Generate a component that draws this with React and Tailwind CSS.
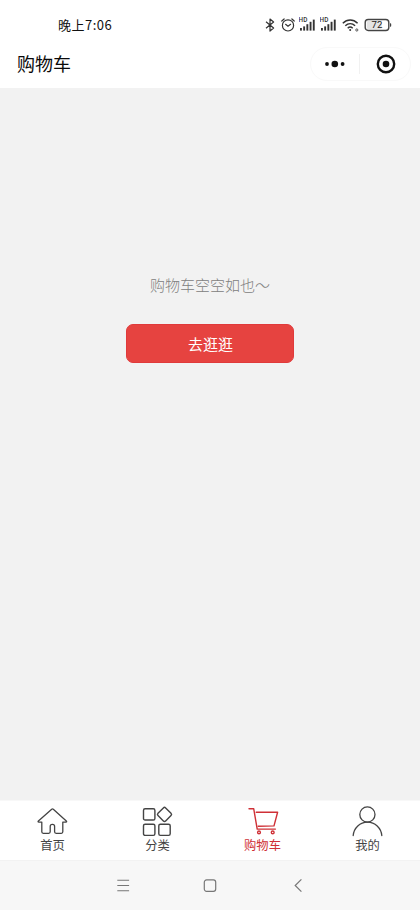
import React from 'react';

const tabs = [
  { label: '首页', icon: HomeIcon },
  { label: '分类', icon: CategoryIcon },
  { label: '购物车', icon: CartIcon, active: true },
  { label: '我的', icon: UserIcon },
];

function HomeIcon() {
  return (
    <svg className="h-8 w-8" viewBox="0 0 32 32" fill="none" stroke="currentColor" strokeWidth="1.3" strokeLinejoin="round" strokeLinecap="round">
      <path d="M14.7 4.2 1.4 15.9c-.6.6-.4 1.2.4 1.2h3v9.7c0 1 .5 1.5 1.5 1.5h5.4c1 0 1.5-.5 1.5-1.5v-5.3c0-1.3.8-2.1 2.1-2.1h.2c1.3 0 2.1.8 2.1 2.1v5.3c0 1 .5 1.5 1.5 1.5h5.2c1 0 1.5-.5 1.5-1.5v-9.7h3.1c.8 0 1-.6.4-1.2L16.3 4.2c-.5-.4-1.1-.4-1.6 0z" />
    </svg>
  );
}

function CategoryIcon() {
  return (
    <svg className="h-8 w-8" viewBox="0 0 32 32" fill="none" stroke="currentColor" strokeWidth="1.4">
      <rect x="1.5" y="3.8" width="11.4" height="11.2" rx="1.6" />
      <rect x="1.5" y="19.2" width="11.4" height="11.2" rx="1.6" />
      <rect x="16.8" y="19.2" width="11.4" height="11.2" rx="1.6" />
      <rect x="17.1" y="4" width="10.8" height="10.8" rx="1.6" transform="rotate(45 22.5 9.4)" />
    </svg>
  );
}

function CartIcon() {
  return (
    <svg className="h-8 w-8" viewBox="0 0 32 32" fill="none" stroke="currentColor" strokeWidth="1.4" strokeLinejoin="round" strokeLinecap="round">
      <path d="M2 3.7h4.7l3.5 20.4H28.4" />
      <path d="M9.2 7.2H30.6L27 20.9 11.2 21.3" />
      <circle cx="12" cy="27.4" r="1.4" />
      <circle cx="25.7" cy="27.4" r="1.4" />
    </svg>
  );
}

function UserIcon() {
  return (
    <svg className="h-8 w-8" viewBox="0 0 32 32" fill="none" stroke="currentColor" strokeWidth="1.3" strokeLinecap="round">
      <circle cx="15.4" cy="9.5" r="7.6" />
      <path d="M1.2 30.5C1.9 22.9 8 17.2 15.5 17.2S29.1 22.9 29.8 30.5" />
    </svg>
  );
}

function SignalIcon() {
  return (
    <svg className="h-4 w-[17px]" viewBox="0 0 17 16">
      <text x="-.4" y="5.2" fontSize="6.4" fontWeight="500" fontFamily="Roboto, sans-serif" fill="#333">HD</text>
      <g fill="#333">
        <rect x="1" y="11" width="1.9" height="2.6" />
        <rect x="4.2" y="9.4" width="1.9" height="4.2" />
        <rect x="7.4" y="7.2" width="1.9" height="6.4" />
        <rect x="10.6" y="4.8" width="1.9" height="8.8" />
        <rect x="13.8" y="2.6" width="1.9" height="11" />
      </g>
    </svg>
  );
}

function StatusBar() {
  return (
    <div className="flex h-[47px] items-center justify-between pt-[3px] pr-[28px] pl-[58px]">
      <span className="-mt-[2px] text-[13px] leading-none tracking-[0.5px] text-[#111]">晚上7:06</span>
      <div className="flex items-center text-[#333]">
        <svg className="mr-[6px] h-4 w-[10px]" viewBox="0 0 10 16" fill="none" stroke="currentColor" strokeWidth="1.2" strokeLinejoin="round">
          <path d="M1 4.8 8.6 11 5 14V2l3.6 3L1 11.2" />
        </svg>
        <svg className="mr-1 h-4 w-[14px]" viewBox="0 0 14 16" fill="none" stroke="currentColor" strokeWidth="1.2" strokeLinecap="round">
          <circle cx="7" cy="8.4" r="5.6" />
          <path d="M4.6 7.3 7 9.2l2.6-1.9M.8 4 3.1 2M13.2 4 10.9 2" />
        </svg>
        <div className="mr-1">
          <SignalIcon />
        </div>
        <div className="mr-[5px]">
          <SignalIcon />
        </div>
        <svg className="mr-[5px] h-4 w-[17px]" viewBox="0 0 17 16" fill="none" stroke="currentColor" strokeWidth="1.5">
          <path d="M.8 6.2c4.4-4.2 10.4-4.2 14.8 0M3.3 8.8c2.9-2.8 6.9-2.8 9.8 0M5.7 11.2c1.5-1.4 3.5-1.4 5 0" />
          <circle cx="8.2" cy="12.9" r="1" fill="currentColor" stroke="none" />
          <circle cx="14.8" cy="13" r="1.1" strokeWidth="0.8" />
        </svg>
        <svg className="h-4 w-[28px]" viewBox="0 0 28 16">
          <rect x="1.2" y="2.5" width="23.6" height="11" rx="3" fill="#fff" stroke="#444" strokeWidth="1.4" />
          <rect x="2.8" y="4.1" width="15" height="7.8" rx="1.4" fill="#e4e4e4" />
          <path d="M26 6.2h.4q.8 0 .8 .8v2q0 .8-.8 .8H26z" fill="#444" />
          <text x="13" y="11.4" textAnchor="middle" fontSize="9.6" fontFamily="Roboto, sans-serif" fill="#222">72</text>
        </svg>
      </div>
    </div>
  );
}

function TitleBar() {
  return (
    <header className="flex h-[41px] items-start justify-between pr-[9px] pl-[17px]">
      <h1 className="pt-[7px] text-[18px] leading-[18px] text-[#0a0a0a]">购物车</h1>
      <div className="flex h-[34px] w-[101px] items-center rounded-full border border-[#f9f9f9]">
        <div className="flex flex-1 items-center justify-center">
          <svg className="h-2 w-5" viewBox="0 0 20 8" fill="#111">
            <circle cx="2" cy="4" r="1.9" />
            <circle cx="9.8" cy="4" r="3.3" />
            <circle cx="17.6" cy="4" r="1.9" />
          </svg>
        </div>
        <div className="h-5 w-px bg-[#f1f1f1]" />
        <div className="flex flex-1 items-center justify-center pl-[2px]">
          <svg className="h-5 w-5" viewBox="0 0 20 20">
            <circle cx="10" cy="10" r="8.2" fill="none" stroke="#111" strokeWidth="2.4" />
            <circle cx="10" cy="10" r="3.3" fill="#111" />
          </svg>
        </div>
      </div>
    </header>
  );
}

function TabBar() {
  return (
    <nav className="grid h-[60px] grid-cols-4 border-t border-[#f8f8f8] bg-white">
      {tabs.map(({ label, icon: Icon, active }) => (
        <button
          key={label}
          className={`flex flex-col items-center justify-start pt-1 ${active ? 'text-[#cf3036]' : 'text-[#444]'}`}
        >
          <Icon />
          <span className="mt-[2px] text-[12.3px] leading-[13px]">{label}</span>
        </button>
      ))}
    </nav>
  );
}

function SystemNav() {
  return (
    <div className="grid h-[50px] grid-cols-[123px_174px_123px] items-center border-t border-[#f2f2f2] bg-[#f7f7f7] text-[#777]">
      <svg className="h-4 w-4 translate-x-2 justify-self-end" viewBox="0 0 16 16" stroke="currentColor" strokeWidth="1.1">
        <path d="M2.3 2.3h11.8M2.3 7.5h11.8M2.3 12.7h11.8" />
      </svg>
      <svg className="h-4 w-4 justify-self-center" viewBox="0 0 16 16" fill="none" stroke="currentColor" strokeWidth="1.2">
        <rect x="2.3" y="1.9" width="11.4" height="11.4" rx="2.3" />
      </svg>
      <svg className="h-4 w-4 -translate-x-[7px]" viewBox="0 0 16 16" fill="none" stroke="currentColor" strokeWidth="1.2">
        <path d="M11.4 1.4 5.2 7.5l6.2 6.1" />
      </svg>
    </div>
  );
}

export default function App() {
  return (
    <div className="flex h-[910px] w-[420px] flex-col overflow-hidden bg-[#f2f2f2] font-['Noto_Sans_CJK_SC',sans-serif]">
      <div className="bg-white">
        <StatusBar />
        <TitleBar />
      </div>

      {/* Empty cart */}
      <main className="flex flex-1 flex-col items-center pt-[187px]">
        <p className="text-[15px] leading-5 font-light text-[#808080]">购物车空空如也～</p>
        <button className="mt-[29px] h-[39px] w-[168px] rounded-[7px] border border-[#e03a3b] bg-[#e64340] pl-px text-[15px] leading-none text-white">
          去逛逛
        </button>
      </main>

      <TabBar />
      <SystemNav />
    </div>
  );
}
